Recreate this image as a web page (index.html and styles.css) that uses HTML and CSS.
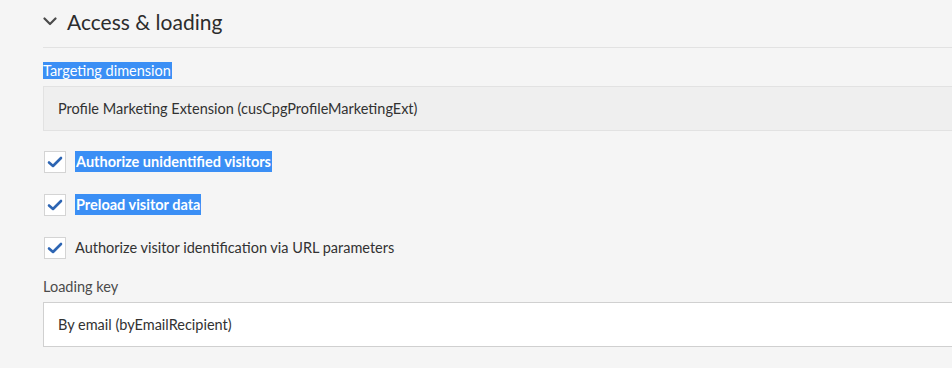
FILE: index.html
```html
<!DOCTYPE html>
<html>
<head>
  <meta name="viewport" content="width=device-width, initial-scale=1.0">
  <link rel="stylesheet" href="styles.css">
</head>
<body>
  <div class="section">
    <div class="section-head">
      <svg class="chevron" width="14" height="9" viewBox="0 0 14 9">
        <path d="M1.5 1.5 L7 7 L12.5 1.5" fill="none" stroke="#4b4b4b" stroke-width="2.2" stroke-linecap="round" stroke-linejoin="round"/>
      </svg>
      <h2>Access &amp; loading</h2>
    </div>

    <div class="field">
      <label class="label"><span class="sel">Targeting dimension</span></label>
      <div class="input disabled">Profile Marketing Extension (cusCpgProfileMarketingExt)</div>
    </div>

    <div class="checks">
      <div class="check">
        <span class="box"><svg width="16" height="12" viewBox="0 0 16 12"><path d="M2 6.5 L6 10 L14 2" fill="none" stroke="#2d65b3" stroke-width="2.6" stroke-linecap="round" stroke-linejoin="round"/></svg></span>
        <span class="sel strong">Authorize unidentified visitors</span>
      </div>
      <div class="check">
        <span class="box"><svg width="16" height="12" viewBox="0 0 16 12"><path d="M2 6.5 L6 10 L14 2" fill="none" stroke="#2d65b3" stroke-width="2.6" stroke-linecap="round" stroke-linejoin="round"/></svg></span>
        <span class="sel strong">Preload visitor data</span>
      </div>
      <div class="check">
        <span class="box"><svg width="16" height="12" viewBox="0 0 16 12"><path d="M2 6.5 L6 10 L14 2" fill="none" stroke="#2d65b3" stroke-width="2.6" stroke-linecap="round" stroke-linejoin="round"/></svg></span>
        <span>Authorize visitor identification via URL parameters</span>
      </div>
    </div>

    <div class="field key">
      <label class="label">Loading key</label>
      <div class="input">By email (byEmailRecipient)</div>
    </div>
  </div>
</body>
</html>
```

FILE: styles.css
```css
html, body {
  margin: 0;
  padding: 0;
  background-color: #f5f5f5;
  font-family: Lato, "Open Sans", sans-serif;
  color: #323232;
  overflow: hidden;
}

.section {
  padding: 0 0 0 43px;
}

.section-head {
  display: flex;
  align-items: center;
  height: 48px;
  border-bottom: 1px solid #e2e2e2;
  box-sizing: border-box;
}

.chevron {
  margin: -4px 10px 0 0;
}

.section-head h2 {
  margin: -5px 0 0 0;
  font-size: 21px;
  font-weight: 400;
  color: #2c2c2c;
}

.field {
  display: flex;
  flex-direction: column;
}

.label {
  font-size: 14.5px;
  height: 20px;
  line-height: 20px;
  margin: 13px 0 5px 0;
  color: #4b4b4b;
}

.key .label {
  margin-top: 19px;
}

.sel {
  background-color: #3b8ff5;
  color: #fff;
  padding: 0 1px 0 0;
}

.input {
  box-sizing: border-box;
  height: 45px;
  line-height: 43px;
  padding: 0 14px;
  font-size: 14.5px;
  background: #fff;
  border: 1px solid #d0d0d0;
  border-right: none;
  color: #323232;
}

.input.disabled {
  background: #efefef;
  border-color: #e2e2e2;
}

.checks {
  display: flex;
  flex-direction: column;
  gap: 21px;
  margin: 19px 0 0 0;
}

.check {
  display: flex;
  align-items: center;
  height: 22px;
  font-size: 14.5px;
}

.check .box {
  box-sizing: border-box;
  width: 22px;
  height: 22px;
  border: 1px solid #d4d4d4;
  background: #fff;
  display: flex;
  align-items: center;
  justify-content: center;
  margin: 2px 9px 0 1px;
}

.check .sel {
  line-height: 21px;
  padding: 0 1px;
}

.strong {
  font-weight: 700;
}
```
